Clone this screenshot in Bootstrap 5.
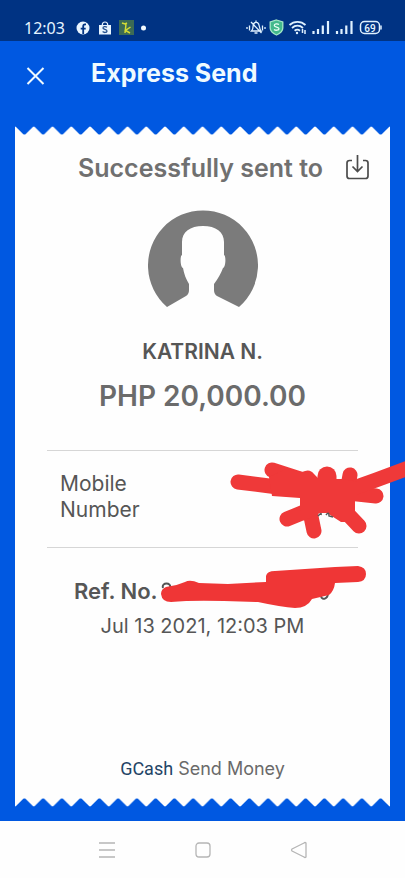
<!DOCTYPE html>
<html lang="en">
<head>
<meta charset="utf-8">
<meta name="viewport" content="width=device-width, initial-scale=1">
<title>Express Send</title>
<link href="https://cdn.jsdelivr.net/npm/bootstrap@5.3.0/dist/css/bootstrap.min.css" rel="stylesheet">
<style>
  body { font-family: Inter, "Open Sans", sans-serif; background: #0058e1; color: #565656; }
  svg { display: block; flex: none; }
  .status-bar { background: #003383; color: #e6f5ff; height: 41px; padding: 16px 22px 0 24px; }
  .clock { font: 400 16px/24px "Noto Sans", sans-serif; }
  .app-bar { padding: 14px 24px 0; height: 85px; gap: 44px; color: #effaff; }
  .app-title { font-size: 25px; line-height: 36px; font-weight: 700; }
  .icon-btn { background: none; border: 0; padding: 0; color: inherit; }
  .receipt-wrap { padding: 0 15px 14px; }
  .paper { background: #fefefe; padding: 15px 20px 17px; }
  .edge { width: 100%; height: 9px; fill: #fefefe; }
  .sent-title { font-size: 25px; line-height: 36px; font-weight: 600; color: #707070; padding-right: 22px; }
  .avatar { margin: 24px auto 28px; }
  .payee { font-size: 21px; line-height: 32px; font-weight: 600; }
  .amount { font-size: 28px; line-height: 40px; font-weight: 600; color: #6b6b6b; margin: 8px 0 34px; }
  .detail { border-top: 1px solid #d6d6d6; border-bottom: 1px solid #d6d6d6; margin: 0 12px; padding: 20px 13px 24px; font-size: 21px; line-height: 26px; }
  .detail-label { width: 100px; }
  .scribble { position: absolute; overflow: visible; pointer-events: none; }
  .scribble-mobile { right: -48px; top: 0; }
  .ref { font-size: 22px; line-height: 32px; font-weight: 600; margin: 27px 0 0 39px; }
  .scribble-ref { left: 86px; top: -11px; }
  .sent-date { font-size: 20px; line-height: 28px; margin-top: 5px; }
  .source { font-size: 18px; line-height: 24px; color: #6a6a6a; gap: 5px; }
  .brand { font-family: Roboto, sans-serif; color: #234466; }
  .nav-keys { background: #fefefe; height: 57px; gap: 76px; color: #b5b5b5; }
</style>
<script src="https://cdn.jsdelivr.net/npm/bootstrap@5.3.0/dist/js/bootstrap.bundle.min.js"></script>
</head>
<body class="d-flex flex-column min-vh-100">
  <div class="status-bar d-flex justify-content-between align-items-start">
    <div class="d-flex align-items-center">
      <span class="clock">12:03</span>
      <svg class="ms-2" width="74" height="20" viewBox="71 18 74 20" aria-hidden="true">
        <circle cx="81" cy="28" r="6.5" fill="#e9f5ff"/>
        <path d="M84 24.3h-1q-1.8 0-1.8 2V34M78.7 28.6h5" fill="none" stroke="#003383" stroke-width="1.8"/>
        <path d="M97 25h12v9.500H97z" fill="#e9f5ff"/>
        <path d="M100.300 25c0-4 5.400-4 5.400 0" fill="none" stroke="#e9f5ff" stroke-width="1.200"/>
        <path d="M105 27.300c-1.500-1.200-4.200-.8-4 .8.200 1.500 4.200 1 4 3-.2 1.700-2.900 1.800-4.400.5" fill="none" stroke="#24508f" stroke-width="1.300"/>
        <path d="M117 20h15v15h-15z" fill="#3c6b55"/>
        <path d="M120 23l3 1 2-1M124 24l-1 9M128.500 27l-5 3.500 4.500 2.500" fill="none" stroke="#d5dc35" stroke-width="1.500"/>
        <circle cx="141.500" cy="28" r="2.500" fill="#f2faff"/>
      </svg>
    </div>
    <svg width="138" height="22" viewBox="246 16 138 22" fill="none" stroke="#dff1ff" stroke-width="1.300" aria-hidden="true">
      <path d="M248 27v2M250.500 25.500v5M263.500 25.500v5M266 27v2M252.500 31h9.500c-2-2-1-7-3.500-8.300-3-1.300-4.500 1.300-4.500 4.300 0 2-.5 3-1.500 4zM255.500 33h3M252 22l10.500 11M257 22v-1.500"/>
      <path d="M277.500 20l6.300 2v6c0 3-3 5.500-6.300 7-3.300-1.500-6.300-4-6.300-7v-6z" fill="#42b98c" stroke="#a3e8c6"/>
      <path d="M280 24.500c-1.500-1-4.700-.8-4.700 1 0 2 4.700 1.200 4.700 3.200 0 1.800-3.500 2-5 .8" stroke="#eafff5"/>
      <path d="M290.500 25c4.500-4.300 11.500-4.300 16 0M293 28c3.300-3 7.700-3 11 0M295.600 30.800c1.800-1.500 3.600-1.500 5.400 0" stroke-width="1.800"/>
      <circle cx="298" cy="33" r="1.200" fill="#dff1ff" stroke="none"/>
      <path d="M303.500 29v4M306 30v4" stroke-width="1.500"/>
      <path d="M314.500 31v3M319 29v5M323.800 25.500V34M329 21v13M338 31v3M342.500 29v5M347.300 25.500V34M352.500 21v13" stroke-width="2.200"/>
      <rect x="361.500" y="21.500" width="19" height="12" rx="4" stroke-width="1.500"/>
      <path d="M382 25.500v4" stroke-width="1.500"/>
      <text x="371" y="31.500" text-anchor="middle" font-family="Roboto" font-size="10" font-weight="500" fill="#e9f7ff" stroke="none">69</text>
    </svg>
  </div>

  <header class="app-bar d-flex align-items-start">
    <button class="icon-btn pt-2 mt-1" type="button" aria-label="Close">
      <svg width="23" height="18" viewBox="0 0 23 18" fill="none" stroke="currentColor" stroke-width="2"><path d="M3.500 1l16 16M19.500 1l-16 16"/></svg>
    </button>
    <h1 class="app-title m-0">Express Send</h1>
  </header>

  <main class="receipt-wrap flex-grow-1 d-flex flex-column">
    <svg class="edge" viewBox="0 0 375 9" preserveAspectRatio="none" aria-hidden="true">
      <defs>
        <pattern id="teeth" width="18.750" height="9" patternUnits="userSpaceOnUse"><path d="M0 9V.5L1 1l7 7q1.400 1 2.800 0l7-7 .950-.5V9z"/></pattern>
      </defs>
      <rect width="375" height="9" fill="url(#teeth)"/>
    </svg>
    <section class="paper flex-grow-1 d-flex flex-column">
      <div class="d-flex justify-content-end align-items-center">
        <h2 class="sent-title flex-grow-1 text-end m-0">Successfully sent to</h2>
        <button class="icon-btn" type="button" aria-label="Save receipt">
          <svg width="25" height="28" viewBox="0 0 25 28" fill="none" stroke="#4b4b4b" stroke-width="1.700"><path d="M7 6.500H4.500q-2.500 0-2.500 2.500v13q0 2.500 2.500 2.500h16q2.500 0 2.500-2.500V9q0-2.500-2.500-2.500H18M12.500 1v16M7.500 12.500l5 5 5-5"/></svg>
        </button>
      </div>

      <svg class="avatar" width="110" height="98" viewBox="0 0 110 98" role="img" aria-label="Profile picture">
        <path d="M19 97A55 55 0 1 1 91 97L69 86Q66 84 66 80V74C70 69 73 63 75 58 78 57 78 45 76 45V32C76 22 68 16 55 16S34 22 34 32V45C32 45 32 57 35 58 36 64 38 69 41 74V80Q41 84 38 86Z" fill="#7b7b7b"/>
      </svg>

      <p class="payee text-center mb-0">KATRINA N.</p>
      <p class="amount text-center">PHP 20,000.00</p>

      <div class="detail position-relative">
        <div class="detail-label">Mobile Number</div>
        <svg class="scribble scribble-mobile" width="190" height="98" viewBox="215 450 190 98" aria-hidden="true">
          <g fill="none" stroke="#ef3939" stroke-linecap="round" stroke-linejoin="round">
            <path d="M237 481L292 488 345 491M271 469L305 480M349 474L345 496M347 492L375 495M286 518L308 509M308 506L313 530M342 508L358 525" stroke-width="15"/>
            <path d="M326 475v12" stroke-width="19"/>
            <path d="M347 489L375 479 410 466" stroke-width="15"/>
          </g>
          <path d="M268 476L285 468 301 471Q309 467 313 473L318 478H342L358 481 354 500 354 512 350 521 340 521 326 512 319 512 307 518 299 509V497L271 495Z" fill="#ef3939"/>
          <path d="M317 515q4-4 3-1M325 514q3-4 3 1l4 1" fill="none" stroke="#555" stroke-width="1.500"/>
        </svg>
      </div>

      <div class="ref position-relative">
        <span>Ref. No.</span>
        <svg class="scribble scribble-ref" width="210" height="46" viewBox="160 564 210 46" aria-hidden="true">
          <path d="M163 588c-2-6 9-6 7 0M321 596c1 5 7 3 7-3" fill="none" stroke="#555" stroke-width="2"/>
          <path d="M166 587Q176 586 185 582 190 579 199 583L228 584Q246 583 266 582V576Q267 571 275 571L335 567 358 566Q366 567 366 574 366 581 358 582L335 583Q334 591 329 595L312 599Q307 608 295 608 281 607 258 602L224 601Q192 600 171 602 162 602 161 594 161 589 166 587Z" fill="#ef3636"/>
        </svg>
      </div>
      <p class="sent-date text-center mb-0">Jul 13 2021, 12:03 PM</p>

      <div class="source d-flex justify-content-center align-items-baseline mt-auto">
        <span class="brand">GCash</span><span>Send Money</span>
      </div>
    </section>
    <svg class="edge" viewBox="0 0 375 9" preserveAspectRatio="none" aria-hidden="true">
      <path d="M0 0H375V9H0Z" transform="matrix(1 0 0 -1 0 9)" fill="url(#teeth)"/>
    </svg>
  </main>

  <nav class="nav-keys d-flex justify-content-center align-items-center" aria-label="System navigation">
    <button class="icon-btn" type="button" aria-label="Recent apps"><svg width="20" height="18" viewBox="0 0 20 18" fill="none" stroke="currentColor" stroke-width="1.300"><path d="M2 2h16M2 9h16M2 16h16"/></svg></button>
    <button class="icon-btn" type="button" aria-label="Home"><svg width="20" height="18" viewBox="0 0 20 18" fill="none" stroke="currentColor" stroke-width="1.300"><rect x="3" y="2" width="14" height="14" rx="3"/></svg></button>
    <button class="icon-btn" type="button" aria-label="Back"><svg width="20" height="18" viewBox="0 0 20 18" fill="none" stroke="currentColor" stroke-width="1.300" stroke-linejoin="round"><path d="M17 2v14q-1 1-2 0L3 10q-1-1 0-2L15 2q1-1 2 0z"/></svg></button>
  </nav>
</body>
</html>
